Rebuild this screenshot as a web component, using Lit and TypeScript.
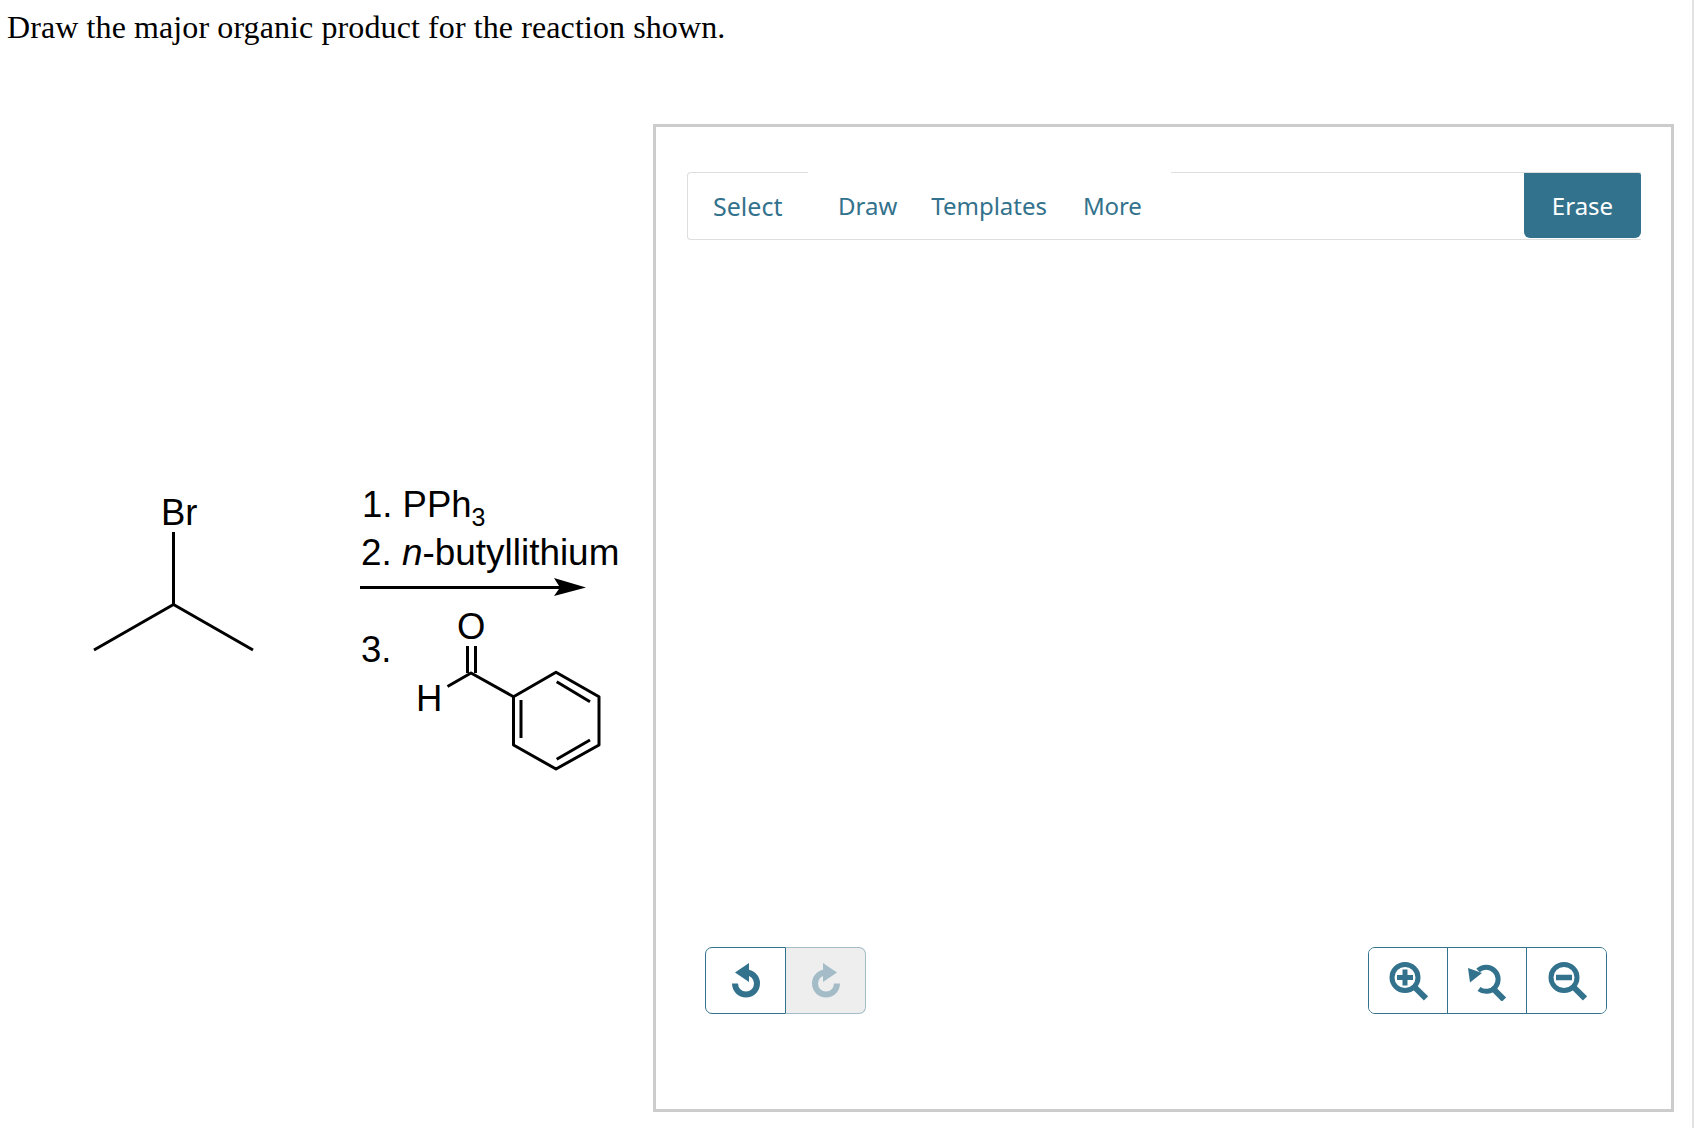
import { LitElement, html, css, svg } from "lit";
import { customElement } from "lit/decorators.js";

const TEAL = "#33728c";

@customElement("app-root")
export class AppRoot extends LitElement {
  static styles = css`
    :host { display: block; width: 1694px; height: 1128px; overflow: hidden; background: #fff; box-sizing: border-box; border-right: 2px solid #e2e2e2; }
    .title { font: 32px/36px "Liberation Serif", serif; color: #000; padding: 9px 0 0 7px; height: 80px; box-sizing: border-box; letter-spacing: 0.1px; }
    .row { display: flex; align-items: flex-start; margin-top: 44px; }
    .scene { width: 653px; height: 986px; flex: none; display: block; }
    .scene text { font-family: "Liberation Sans", Arial, sans-serif; fill: #000; }
    .editor { width: 1021px; height: 988px; flex: none; box-sizing: border-box; border: 3px solid #cccccc; padding: 45px 30px 0 31px; display: flex; flex-direction: column; font-family: "Noto Sans", sans-serif; }
    .toolbar { height: 68px; display: flex; align-items: stretch; position: relative; box-sizing: border-box; border-top: 1px solid #dedede; border-bottom: 1px solid #dedede; border-left: 1px solid #dedede; border-radius: 4px 0 0 4px; flex: none; }
    .tab { font-size: 24px; color: #33728c; display: flex; align-items: center; padding-bottom: 1px; }
    .select { width: 121px; padding-left: 25px; box-sizing: border-box; font-size: 25px; }
    .draw { margin-left: 29px; }
    .templates { margin-left: 34px; }
    .more { margin-left: 36px; letter-spacing: -0.2px; }
    .gap { position: absolute; left: 120px; width: 363px; top: -1px; height: 1px; background: #fff; }
    .erase { margin-left: auto; width: 117px; margin-bottom: 1px; background: #33728c; color: #fff; font-size: 24px; display: flex; align-items: center; justify-content: center; border-radius: 0 2px 6px 6px; }
    .bottom { display: flex; justify-content: space-between; margin-top: 707px; padding: 0 34px 0 18px; }
    .group { display: flex; height: 67px; border: 1px solid #33728c; border-radius: 7px; box-sizing: border-box; overflow: hidden; }
    .group.undo { border: none; border-radius: 0; overflow: visible; }
    .btn { width: 79px; display: flex; align-items: center; justify-content: center; box-sizing: border-box; background: #fff; }
    .btn.narrow { width: 78px; }
    .btn.wide { width: 80px; }
    .btn + .btn { border-left: 1px solid #33728c; }
    .undo .first { border: 1px solid #33728c; border-radius: 7px 0 0 7px; width: 81px; }
    .undo .btn + .btn { border: 1px solid #a4bcc7; border-left: none; border-radius: 0 7px 7px 0; background: #eeeeee; width: 80px; }
    svg.ic { width: 40px; height: 40px; display: block; }
    svg.flip { transform: scaleX(-1); }
  `;

  private scene() {
    return html`
      <svg class="scene" viewBox="0 0 653 986">
        <g stroke="#000" stroke-width="3" fill="none" stroke-linecap="butt" stroke-linejoin="round">
          <path d="M173.500 408V480.500L94 526M173.500 480.500L253 526"/>
          <path d="M360 463.500H560"/>
          <path d="M467.500 522V549M475.500 522V549"/>
          <path d="M447.500 562.500L471 549L513.500 572.700V621L556 645L599 621V572.700L556 548.300L513.500 572.700"/>
          <path d="M521 576V614M556.700 635.300L590 616M556.700 557.700L590 577.700"/>
        </g>
        <path d="M554 454L586 463.500L554 472L560 463.500Z" fill="#000"/>
        <text x="161" y="400.500" font-size="36.500">Br</text>
        <text x="362" y="393" font-size="36.500">1. PPh<tspan font-size="25" dy="9">3</tspan></text>
        <text x="361" y="441" font-size="36.900">2. <tspan font-style="italic">n</tspan>-butyllithium</text>
        <text x="361" y="538" font-size="36.500">3.</text>
        <text x="457" y="515" font-size="36.500">O</text>
        <text x="416" y="587" font-size="36.500">H</text>
      </svg>`;
  }

  private arrow(flip: boolean, c: string) {
    return html`<svg class="ic ${flip ? "flip" : ""}" viewBox="0 0 40 40">
      <path d="M20 11.500A11 11 0 1 1 9 22.500" fill="none" stroke=${c} stroke-width="6"/>
      <path d="M23 2L9 11.500L23 21Z" fill=${c}/>
    </svg>`;
  }

  private lens(inner: unknown) {
    return html`<svg class="ic" viewBox="0 0 40 40">
      <circle cx="17" cy="16.500" r="13" fill="none" stroke=${TEAL} stroke-width="5"/>
      <path d="M26.500 26L38 37.500" stroke=${TEAL} stroke-width="6"/>
      ${inner}
    </svg>`;
  }

  render() {
    return html`
      <div class="title">Draw the major organic product for the reaction shown.</div>
      <div class="row">
        ${this.scene()}
        <div class="editor">
          <div class="toolbar">
            <div class="gap"></div>
            <div class="tab select">Select</div>
            <div class="tab draw">Draw</div>
            <div class="tab templates">Templates</div>
            <div class="tab more">More</div>
            <div class="erase">Erase</div>
          </div>
          <div class="bottom">
            <div class="group undo">
              <div class="btn first">${this.arrow(false, TEAL)}</div>
              <div class="btn">${this.arrow(true, "#a4bcc7")}</div>
            </div>
            <div class="group">
              <div class="btn narrow">${this.lens(svg`<path d="M17 8.500V24.500M9 16.500H25" stroke=${TEAL} stroke-width="5"/>`)}</div>
              <div class="btn">
                <svg class="ic" viewBox="0 0 40 40">
                  <path d="M11 9.500A12 12 0 1 1 12 28" fill="none" stroke=${TEAL} stroke-width="5"/>
                  <path d="M1 7L15 12L3 21.500Z" fill=${TEAL}/>
                  <path d="M26 27.500L37 38.500" stroke=${TEAL} stroke-width="6"/>
                </svg>
              </div>
              <div class="btn wide">${this.lens(svg`<path d="M9 16.500H25" stroke=${TEAL} stroke-width="5.500"/>`)}</div>
            </div>
          </div>
        </div>
      </div>
    `;
  }
}
